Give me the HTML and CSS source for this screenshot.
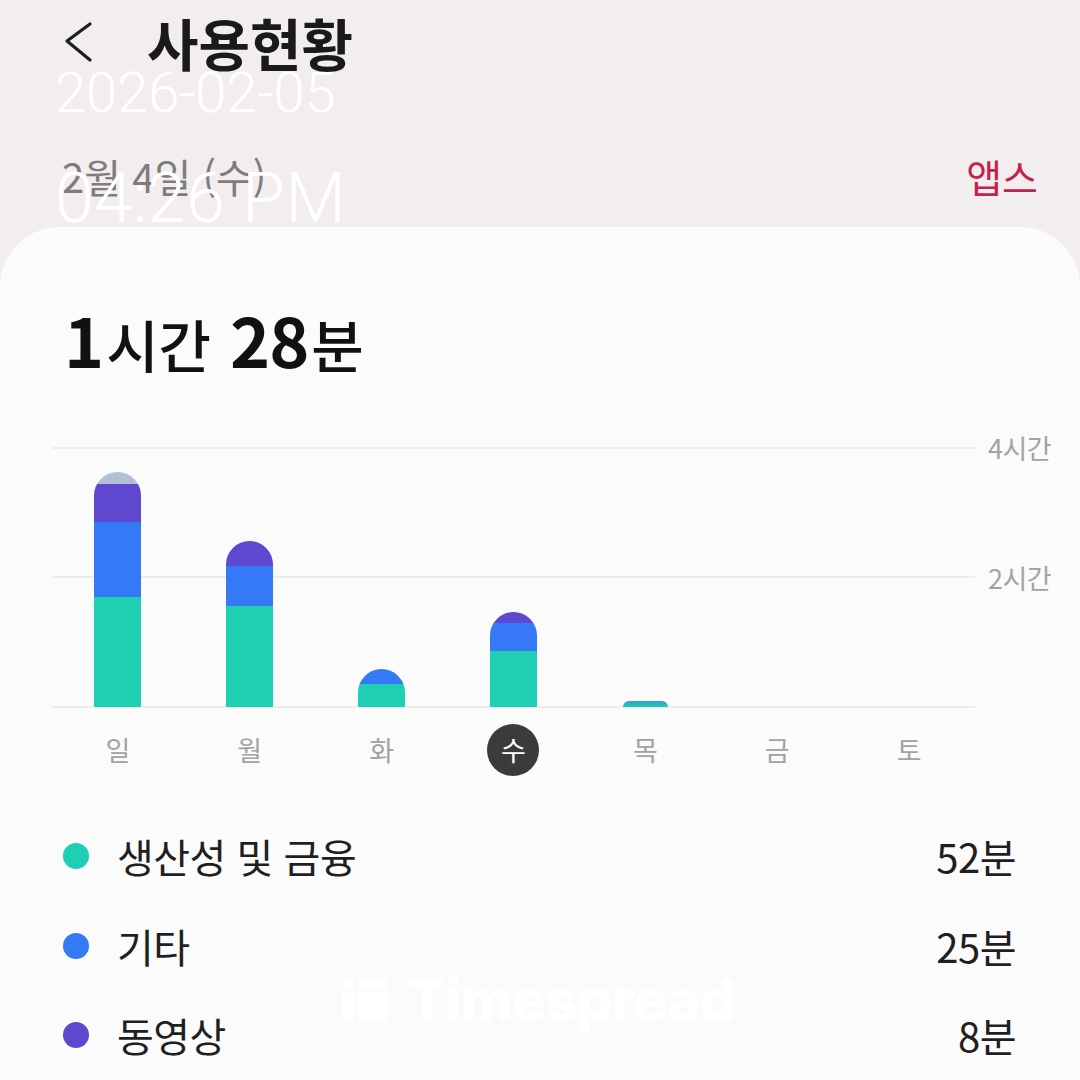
FILE: index.html
```html
<!DOCTYPE html>
<html lang="ko">
<head>
<meta charset="utf-8">
<title>사용현황</title>
<link rel="stylesheet" href="styles.css">
</head>
<body>
<div class="screen">
  <header class="topbar">
    <svg class="back" width="34" height="48" viewBox="0 0 34 48">
      <polyline points="28,6 5,23 28,42" fill="none" stroke="#1e1e1e" stroke-width="3.2" stroke-linecap="round" stroke-linejoin="round"/>
    </svg>
    <h1 class="title">사용현황</h1>
  </header>
  <div class="subbar">
    <span class="date">2월 4일 (수)</span>
    <span class="apps">앱스</span>
  </div>
  <main class="card">
    <div class="total"><span class="num">1</span><span class="unit">시간</span> <span class="num">28</span><span class="unit">분</span></div>
    <div class="chart">
      <div class="plot">
        <div class="col"><div class="bar"><div class="seg gray" style="height:12px"></div><div class="seg purple" style="height:38px"></div><div class="seg blue" style="height:75px"></div><div class="seg teal" style="height:110px"></div></div></div>
        <div class="col"><div class="bar"><div class="seg purple" style="height:25px"></div><div class="seg blue" style="height:40px"></div><div class="seg teal" style="height:101px"></div></div></div>
        <div class="col"><div class="bar"><div class="seg blue" style="height:15px"></div><div class="seg teal" style="height:23px"></div></div></div>
        <div class="col"><div class="bar"><div class="seg purple" style="height:11px"></div><div class="seg blue" style="height:28px"></div><div class="seg teal" style="height:56px"></div></div></div>
        <div class="col"><div class="bar tiny"><div class="seg mix" style="height:6px"></div></div></div>
        <div class="col"></div>
        <div class="col"></div>
      </div>
      <div class="axis">
        <span class="tick">4시간</span>
        <span class="tick">2시간</span>
      </div>
      <div class="days">
        <span class="day">일</span>
        <span class="day">월</span>
        <span class="day">화</span>
        <span class="day"><span class="sel">수</span></span>
        <span class="day">목</span>
        <span class="day">금</span>
        <span class="day">토</span>
      </div>
    </div>
    <ul class="legend">
      <li class="row"><span class="dot teal"></span><span class="name">생산성 및 금융</span><span class="val">52분</span></li>
      <li class="row"><span class="dot blue"></span><span class="name">기타</span><span class="val">25분</span></li>
      <li class="row"><span class="dot purple"></span><span class="name">동영상</span><span class="val">8분</span></li>
    </ul>
  </main>
  <div class="stamp-date">2026-02-05</div>
  <div class="stamp-time">04:26 PM</div>
  <div class="watermark">
    <svg width="46" height="44" viewBox="0 0 46 44">
      <circle cx="6" cy="6" r="6" fill="#ffffff"/>
      <rect x="0" y="15" width="12" height="28" fill="#ffffff"/>
      <rect x="16" y="0" width="29" height="10" fill="#ffffff"/>
      <rect x="16" y="14" width="29" height="29" fill="#ffffff"/>
    </svg>
    <span class="wm-text">Timespread</span>
  </div>
</div>
</body>
</html>
```
FILE: styles.css
```css
* { box-sizing: border-box; }
html, body { margin: 0; padding: 0; }
body {
  background: #f2eef0;
  font-family: "Noto Sans CJK KR", "Noto Sans", sans-serif;
  color: #1e1e1e;
}
.screen {
  position: relative;
  width: 1080px;
  height: 1080px;
  overflow: hidden;
  display: flex;
  flex-direction: column;
}
.topbar {
  height: 86px;
  display: flex;
  align-items: center;
  padding-left: 62px;
  gap: 51px;
}
.back { display: block; }
.title {
  margin: 0;
  font-size: 56px;
  font-weight: 700;
  line-height: 1;
  color: #1a1a1a;
}
.subbar {
  height: 143px;
  padding: 41px 42px 0 62px;
  display: flex;
  align-items: center;
  justify-content: space-between;
}
.date {
  font-size: 40px;
  color: #7e7c7d;
}
.apps {
  font-size: 39px;
  color: #c2234b;
}
.card {
  flex: 1;
  background: #fbfbfb;
  border-radius: 60px 60px 0 0;
  padding: 72px 28px 0 52px;
}
.total {
  padding-left: 12px;
  font-size: 68px;
  line-height: 80px;
  height: 88px;
  color: #111;
}
.total .num { font-weight: 700; letter-spacing: -1px; }
.total .num + .unit { margin-left: 3px; }
.total .unit { font-size: 57px; font-weight: 500; }
.chart {
  margin-top: 60px;
  display: grid;
  grid-template-columns: 923px 1fr;
  column-gap: 13px;
}
.plot {
  height: 261px;
  display: grid;
  grid-template-columns: repeat(7, 1fr);
  align-items: end;
  justify-items: center;
  background-image:
    linear-gradient(#ededed, #ededed),
    linear-gradient(#ededed, #ededed),
    linear-gradient(#ededed, #ededed);
  background-size: 100% 2px;
  background-repeat: no-repeat;
  background-position: 0 0, 0 50%, 0 100%;
}
.col { width: 100%; display: flex; justify-content: center; align-items: flex-end; height: 100%; }
.bar {
  width: 47px;
  display: flex;
  flex-direction: column;
  border-radius: 24px 24px 0 0;
  overflow: hidden;
  margin-bottom: 1px;
}
.bar.tiny { border-radius: 6px 6px 0 0; width: 45px; }
.seg { width: 100%; }
.teal { background: #1ecfb3; }
.blue { background: #3579f7; }
.purple { background: #5f47d0; }
.gray { background: #b2c0d7; }
.mix { background: linear-gradient(#2f9fd3, #1ecfb3); }
.axis {
  height: 261px;
  display: grid;
  grid-template-rows: 1fr 1fr;
}
.tick {
  font-size: 27px;
  line-height: 30px;
  color: #a3a3a3;
  white-space: nowrap;
  transform: translateY(-14px);
  letter-spacing: -0.5px;
}
.days {
  display: grid;
  grid-template-columns: repeat(7, 1fr);
  padding-top: 16px;
  height: 68px;
}
.day {
  display: flex;
  justify-content: center;
  align-items: center;
  height: 52px;
  font-size: 27px;
  color: #a2a2a2;
}
.sel {
  width: 52px;
  height: 52px;
  border-radius: 50%;
  background: #3b3b3b;
  color: #fff;
  display: flex;
  align-items: center;
  justify-content: center;
}
.legend {
  list-style: none;
  margin: 36px 0 0 0;
  padding: 0 36px 0 11px;
}
.row {
  height: 89.5px;
  display: flex;
  align-items: center;
}
.dot {
  width: 26px;
  height: 26px;
  border-radius: 50%;
  margin-right: 28px;
  flex: none;
}
.name {
  font-size: 40px;
  color: #1f1f1f;
  letter-spacing: -0.5px;
}
.val {
  margin-left: auto;
  font-size: 40px;
  color: #1f1f1f;
  letter-spacing: -0.5px;
}
.stamp-date {
  position: absolute;
  left: 55px;
  top: 65px;
  font-family: Roboto, "Liberation Sans", sans-serif;
  font-weight: 300;
  font-size: 56px;
  line-height: 1;
  color: #ffffff;
}
.stamp-time {
  position: absolute;
  left: 55px;
  top: 163px;
  font-family: Roboto, "Liberation Sans", sans-serif;
  font-weight: 300;
  font-size: 70px;
  line-height: 1;
  color: #ffffff;
}
.watermark {
  position: absolute;
  left: 342px;
  top: 978px;
  display: flex;
  align-items: flex-start;
  gap: 20px;
}
.wm-text {
  font-family: Inter, "Liberation Sans", sans-serif;
  font-weight: 800;
  font-size: 56px;
  line-height: 44px;
  letter-spacing: -0.5px;
  color: #ffffff;
}
```
